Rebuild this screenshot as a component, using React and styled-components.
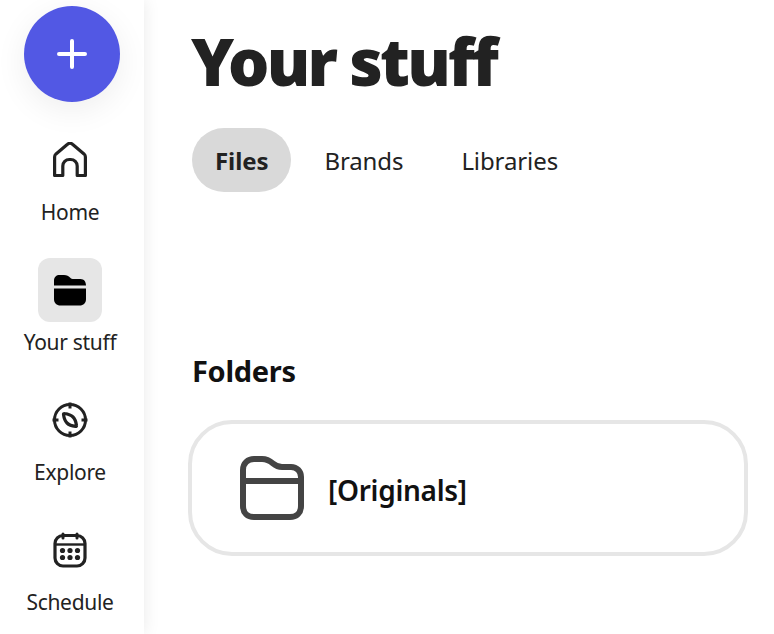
import React from 'react';
import styled, { createGlobalStyle } from 'styled-components';

const Global = createGlobalStyle`
  html, body { margin: 0; padding: 0; background: #fff; overflow: hidden; }
  body { font-family: "Noto Sans", "Open Sans", "Liberation Sans", sans-serif; }
`;

const Page = styled.div`
  display: flex;
  width: 774px;
  height: 634px;
  overflow: hidden;
  background: #fff;
`;

const Sidebar = styled.nav`
  flex: none;
  width: 144px;
  height: 634px;
  padding-top: 6px;
  box-sizing: border-box;
  display: flex;
  flex-direction: column;
  align-items: center;
  background: #fff;
  box-shadow: 0 0 16px rgba(0, 0, 0, 0.09);
`;

const Fab = styled.button`
  flex: none;
  width: 96px;
  height: 96px;
  border: none;
  border-radius: 50%;
  padding: 0;
  display: flex;
  align-items: center;
  justify-content: center;
  background: #5258e4;
  box-shadow: 0 8px 32px rgba(0, 0, 0, 0.07);
  margin-bottom: 26px;
`;

const NavItem = styled.div`
  flex: none;
  display: flex;
  flex-direction: column;
  align-items: center;
  height: 130px;
  margin-right: 4px;
`;

const Tile = styled.div`
  width: 64px;
  height: 64px;
  border-radius: 12px;
  display: flex;
  align-items: center;
  justify-content: center;
  background: ${p => (p.$active ? '#e6e6e6' : 'transparent')};
`;

const NavLabel = styled.span`
  margin-top: 3px;
  font-size: 21px;
  line-height: 34px;
  color: #222;
  letter-spacing: -0.3px;
  white-space: nowrap;
`;

const Main = styled.main`
  flex: 1;
  padding: 19px 26px 0 44px;
  min-width: 0;
`;

const Title = styled.h1`
  margin: 0 0 0 3px;
  font-size: 65px;
  line-height: 85px;
  font-weight: 900;
  color: #222;
  letter-spacing: -2.8px;
  white-space: nowrap;
`;

const Tabs = styled.div`
  display: flex;
  margin-top: 24px;
  margin-left: 4px;
`;

const Tab = styled.div`
  height: 64px;
  padding: 0 23px;
  border-radius: 32px;
  display: flex;
  align-items: center;
  font-size: 24px;
  letter-spacing: -0.1px;
  font-weight: ${p => (p.$active ? 700 : 400)};
  color: #222;
  background: ${p => (p.$active ? '#d9d9d9' : 'transparent')};
  margin-right: ${p => p.$gap || 0}px;
`;

const Heading = styled.h2`
  margin: 156px 0 0 4px;
  font-size: 29px;
  line-height: 46px;
  font-weight: 700;
  color: #111;
  letter-spacing: -0.3px;
`;

const FolderCard = styled.div`
  margin-top: 26px;
  width: 560px;
  height: 136px;
  box-sizing: border-box;
  border: 4px solid #e6e6e6;
  border-radius: 44px;
  display: flex;
  align-items: center;
  gap: 24px;
  padding-left: 48px;
`;

const FolderName = styled.span`
  margin-top: 3px;
  font-size: 28px;
  font-weight: 600;
  color: #111;
  letter-spacing: -0.3px;
  white-space: nowrap;
`;

const Plus = () => (
  <svg width="32" height="32" viewBox="0 0 32 32" fill="none" stroke="#fff" strokeWidth="4" strokeLinecap="round">
    <path d="M16 3v26M3 16h26" />
  </svg>
);

const HomeIcon = () => (
  <svg width="34" height="36" viewBox="0 0 34 36" fill="none" stroke="#222" strokeWidth="3.2" strokeLinejoin="round">
    <path d="M1.600 33.500V15c0-1.300.5-2.300 1.400-3.100L14.500 2.300a3.800 3.800 0 0 1 5 0l11.500 9.600c.9.800 1.400 1.800 1.400 3.100v18.500h-8.200V24a6.500 6.500 0 0 0-6.500-6.500h-1.400A6.500 6.500 0 0 0 9.800 24v9.500z" />
  </svg>
);

const FolderSolid = () => (
  <svg width="34" height="32" viewBox="0 0 34 32">
    <path d="M1 11.500V6.500C1 3 3.500 1 6.500 1h4.500c3 0 4.500 1 6 2.500 1 1 2 1.500 4 1.500h6.500c3.500 0 5.500 2.800 5.500 6.500z" fill="#000" />
    <path d="M1 14.500h32V25c0 4-2.500 6.500-6.500 6.500h-19C3.500 31.500 1 29 1 25z" fill="#000" />
  </svg>
);

const CompassIcon = () => (
  <svg width="38" height="38" viewBox="0 0 38 38" fill="none" stroke="#222">
    <circle cx="19" cy="19" r="15.500" strokeWidth="3" />
    <path d="M19 1.500v6M19 30.500v6M1.500 19h6M30.500 19h6" strokeWidth="3" />
    <path d="M13.500 12.500c3.500.5 6.500 1.500 8.500 3.500s3 5 3.500 8.500c.1.600-.4 1.100-1 1-3.500-.5-6.500-1.500-8.500-3.500s-3-5-3.500-8.500c-.1-.6.400-1.100 1-1z" strokeWidth="3.200" strokeLinejoin="round" />
  </svg>
);

const CalendarIcon = () => (
  <svg width="34" height="36" viewBox="0 0 34 36" fill="none" stroke="#222">
    <rect x="2" y="3.500" width="30" height="30.500" rx="8" strokeWidth="3.200" />
    <path d="M10 2v4M24 2v4" strokeWidth="3" strokeLinecap="round" />
    <path d="M2 12.500h30" strokeWidth="2.400" />
    <g fill="#222" stroke="none">
      <circle cx="9.500" cy="18.500" r="2.600" /><circle cx="17" cy="18.500" r="2.600" /><circle cx="24.500" cy="18.500" r="2.600" />
      <circle cx="9.500" cy="25.500" r="2.600" /><circle cx="17" cy="25.500" r="2.600" /><circle cx="24.500" cy="25.500" r="2.600" />
    </g>
  </svg>
);

const FolderOutline = () => (
  <svg width="64" height="64" viewBox="0 0 64 64" fill="none" stroke="#444" strokeWidth="6" strokeLinejoin="round">
    <path d="M3 22V14C3 7 8 3 14 3h8c5 0 7.500 1.500 11 4.500 3 2.500 5 3.500 9 3.500h9c6 0 10 4.500 10 10v29c0 7-4.500 11-11 11H14C7.500 61 3 57 3 50z" />
    <path d="M3 25h58" />
  </svg>
);

const nav = [
  { label: 'Home', icon: <HomeIcon /> },
  { label: 'Your stuff', icon: <FolderSolid />, active: true },
  { label: 'Explore', icon: <CompassIcon /> },
  { label: 'Schedule', icon: <CalendarIcon /> },
];

export default function App() {
  return (
    <Page>
      <Global />
      <Sidebar>
        <Fab aria-label="Create"><Plus /></Fab>
        {nav.map(n => (
          <NavItem key={n.label}>
            <Tile $active={n.active}>{n.icon}</Tile>
            <NavLabel>{n.label}</NavLabel>
          </NavItem>
        ))}
      </Sidebar>
      <Main>
        <Title>Your stuff</Title>
        <Tabs>
          <Tab $active $gap={10}>Files</Tab>
          <Tab $gap={12}>Brands</Tab>
          <Tab>Libraries</Tab>
        </Tabs>
        <Heading>Folders</Heading>
        <FolderCard>
          <FolderOutline />
          <FolderName>[Originals]</FolderName>
        </FolderCard>
      </Main>
    </Page>
  );
}
